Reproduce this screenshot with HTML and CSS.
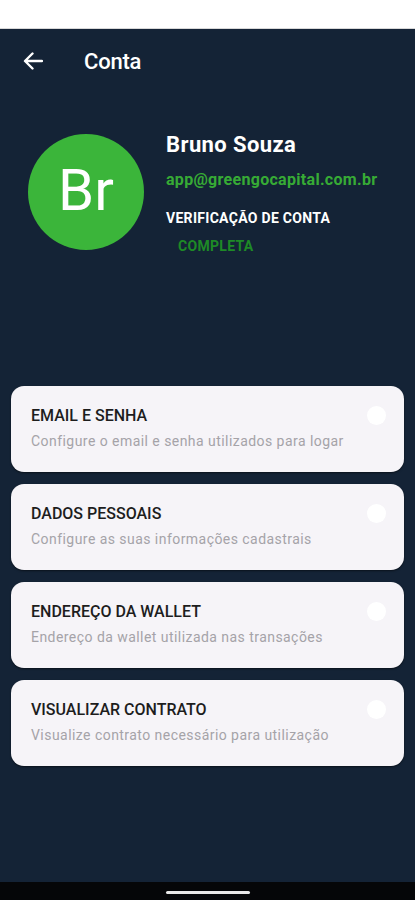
FILE: index.html
```html
<!DOCTYPE html>
<html lang="pt-BR">
<head>
  <meta charset="UTF-8">
  <meta name="viewport" content="width=device-width, initial-scale=1.0">
  <title>Conta</title>
  <link rel="stylesheet" href="styles.css">
</head>
<body>
  <div class="status-bar"></div>

  <div class="screen">
    <!-- cabeçalho -->
    <header class="top-bar">
      <svg class="back" width="20" height="18" viewBox="0 0 20 18" aria-hidden="true">
        <path d="M19 9H2.5M9.5 1.5L2 9l7.5 7.5" fill="none" stroke="#fff" stroke-width="2.4" stroke-linecap="round" stroke-linejoin="round"/>
      </svg>
      <h1>Conta</h1>
    </header>

    <!-- perfil -->
    <section class="profile">
      <div class="avatar">Br</div>
      <div class="info">
        <p class="name">Bruno Souza</p>
        <p class="email">app@greengocapital.com.br</p>
        <p class="verify">VERIFICAÇÃO DE CONTA</p>
        <p class="status">COMPLETA</p>
      </div>
    </section>

    <!-- opções -->
    <ul class="options">
      <li class="card">
        <div class="texts">
          <p class="title">EMAIL E SENHA</p>
          <p class="desc">Configure o email e senha utilizados para logar</p>
        </div>
        <span class="dot"></span>
      </li>
      <li class="card">
        <div class="texts">
          <p class="title">DADOS PESSOAIS</p>
          <p class="desc">Configure as suas informações cadastrais</p>
        </div>
        <span class="dot"></span>
      </li>
      <li class="card">
        <div class="texts">
          <p class="title">ENDEREÇO DA WALLET</p>
          <p class="desc">Endereço da wallet utilizada nas transações</p>
        </div>
        <span class="dot"></span>
      </li>
      <li class="card">
        <div class="texts">
          <p class="title">VISUALIZAR CONTRATO</p>
          <p class="desc">Visualize contrato necessário para utilização</p>
        </div>
        <span class="dot"></span>
      </li>
    </ul>
  </div>

  <div class="nav-bar"><span class="pill"></span></div>
</body>
</html>
```

FILE: styles.css
```css
/* base */
* {
  box-sizing: border-box;
}

body {
  margin: 0;
  width: 415px;
  height: 900px;
  display: flex;
  flex-direction: column;
  font-family: Roboto, 'Noto Sans', sans-serif;
  background: #142336;
  color: #fff;
  overflow: hidden;
}

p {
  margin: 0;
}

.status-bar {
  height: 29px;
  background: #fff;
  border-bottom: 1px solid #d8d8d8;
}

.screen {
  flex: 1;
  background: #142336;
}

/* cabeçalho */
.top-bar {
  height: 64px;
  display: flex;
  align-items: center;
  padding-left: 23px;
}

.back {
  display: block;
}

.top-bar h1 {
  margin: 0 0 0 41px;
  font-size: 22px;
  font-weight: 500;
  letter-spacing: -0.2px;
}

/* perfil */
.profile {
  display: flex;
  padding: 41px 0 0 28px;
  height: 293px;
}

.avatar {
  width: 116px;
  height: 116px;
  border-radius: 50%;
  background: #3bb53a;
  display: flex;
  align-items: center;
  justify-content: center;
  font-size: 58px;
  padding-bottom: 4px;
  flex-shrink: 0;
}

.info {
  margin-left: 22px;
  margin-top: -2px;
}

.name {
  font-size: 22px;
  font-weight: 700;
  letter-spacing: 0.4px;
  line-height: 26px;
}

.email {
  margin-top: 12px;
  font-size: 16px;
  font-weight: 700;
  letter-spacing: 0.3px;
  color: #37ab35;
  line-height: 20px;
}

.verify {
  margin-top: 19px;
  font-size: 14px;
  font-weight: 700;
  letter-spacing: 0.3px;
  line-height: 18px;
}

.status {
  margin: 10px 0 0 12px;
  font-size: 14px;
  font-weight: 700;
  letter-spacing: 0.3px;
  color: #1e8a26;
  line-height: 18px;
}

/* opções */
.options {
  list-style: none;
  margin: 0;
  padding: 0 11px;
  display: flex;
  flex-direction: column;
  gap: 12px;
}

.card {
  height: 86px;
  background: #f6f4f8;
  border-radius: 13px;
  display: flex;
  align-items: flex-start;
  justify-content: space-between;
  padding: 20px 18px 0 20px;
  box-shadow: 0 1px 2px rgba(0, 0, 0, 0.5);
}

.title {
  font-size: 16px;
  font-weight: 500;
  color: #1d1d1d;
  line-height: 20px;
}

.desc {
  margin-top: 5px;
  font-size: 14px;
  color: #a5a3a8;
  letter-spacing: 0.45px;
  line-height: 20px;
}

.dot {
  width: 19px;
  height: 19px;
  border-radius: 50%;
  background: #fff;
  flex-shrink: 0;
  margin-top: 0;
}

/* barra de navegação */
.nav-bar {
  height: 18px;
  background: #050608;
  display: flex;
  justify-content: center;
  padding-top: 9px;
}

.pill {
  width: 84px;
  height: 3px;
  border-radius: 2px;
  background: #e8e8e8;
}
```
